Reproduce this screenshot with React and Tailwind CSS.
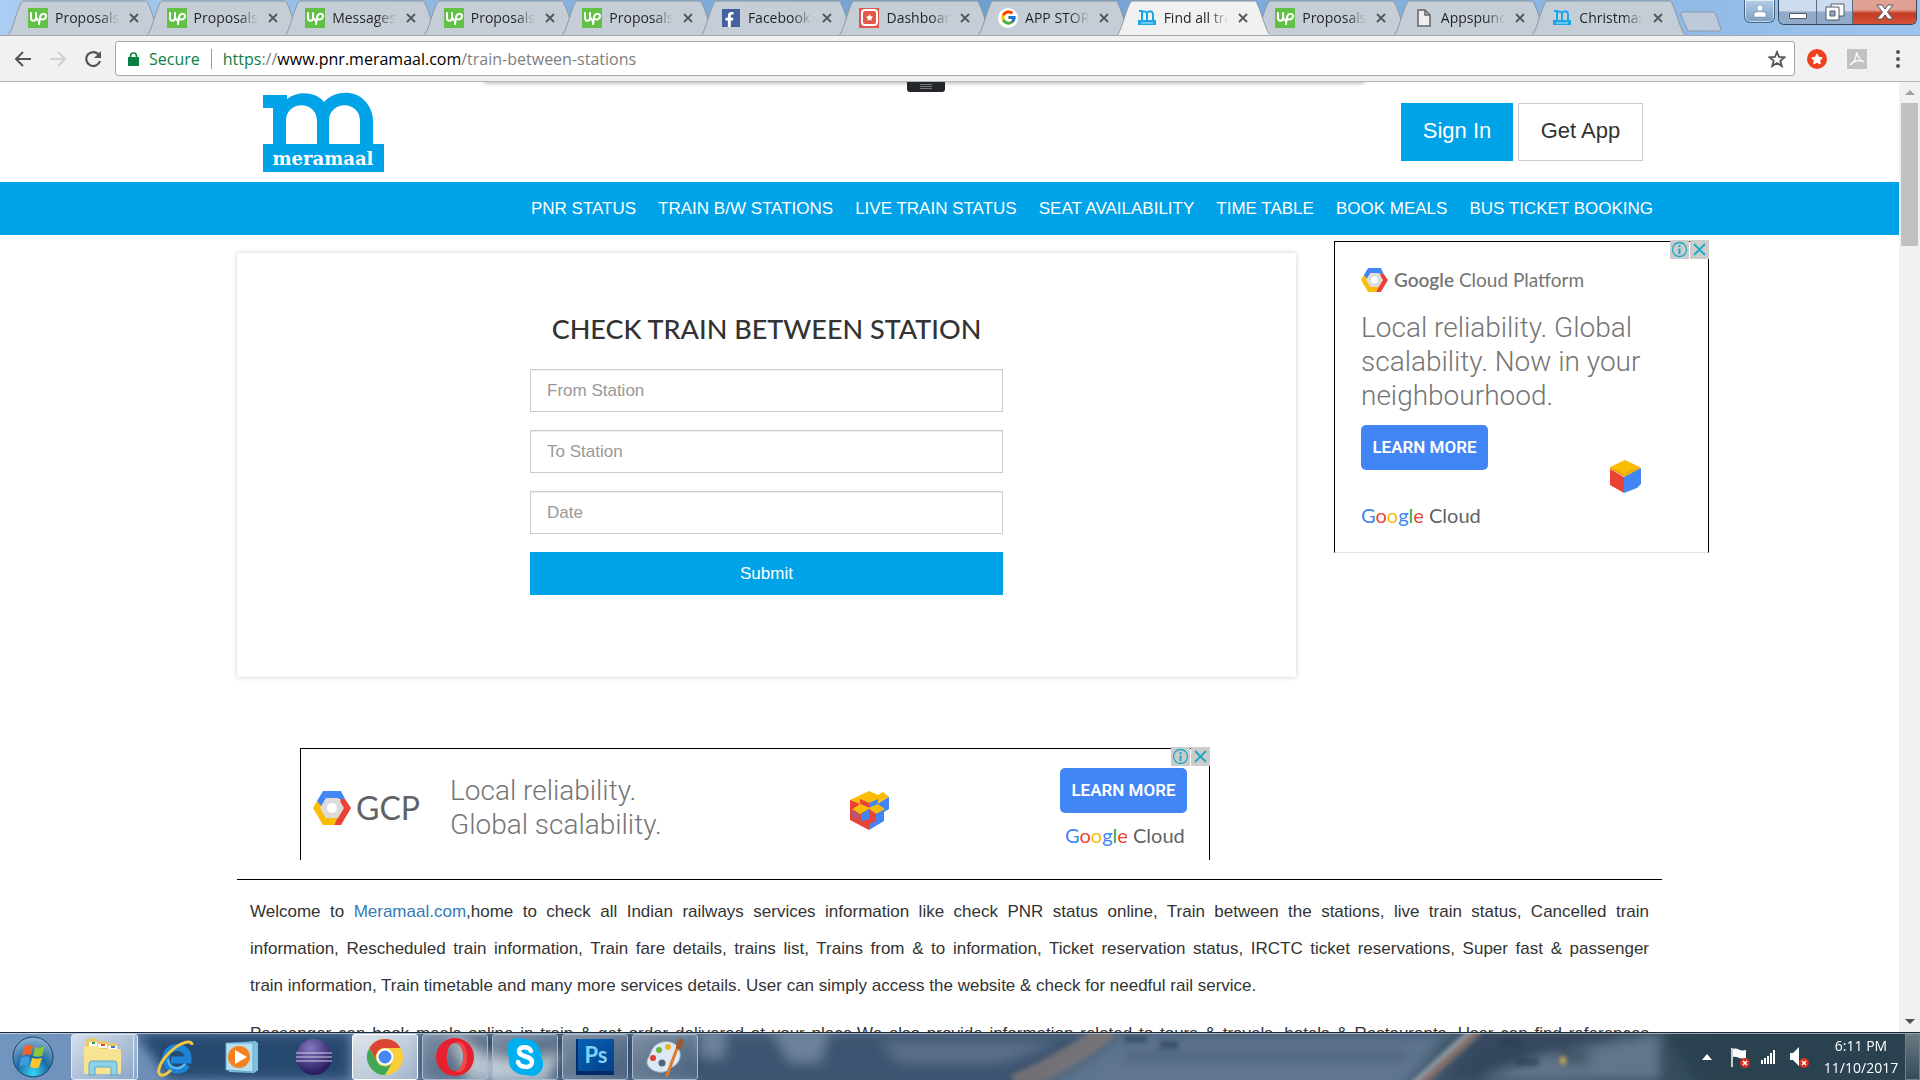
import { FaFacebookF, FaStar } from "react-icons/fa";
import { FcGoogle } from "react-icons/fc";

const tabs = [
  { title: "Proposals", icon: "up" },
  { title: "Proposals", icon: "up" },
  { title: "Messages", icon: "up" },
  { title: "Proposals", icon: "up" },
  { title: "Proposals", icon: "up" },
  { title: "Facebook", icon: "facebook" },
  { title: "Dashboard", icon: "dashboard" },
  { title: "APP STORE", icon: "google" },
  { title: "Find all train", icon: "m", active: true },
  { title: "Proposals", icon: "up" },
  { title: "Appspundit", icon: "file" },
  { title: "Christmas", icon: "m" },
];

const navLinks = [
  "PNR STATUS",
  "TRAIN B/W STATIONS",
  "LIVE TRAIN STATUS",
  "SEAT AVAILABILITY",
  "TIME TABLE",
  "BOOK MEALS",
  "BUS TICKET BOOKING",
];

/* ---------- browser chrome ---------- */

function MIcon() {
  return (
    <svg viewBox="0 0 18 17" className="h-[17px] w-[18px]" fill="none" stroke="#1aa7ea">
      <path d="M1 2h3v9M4 4c1-2 5-2 5 1v6M9 5c0-3 5-4 6 0v6" strokeWidth="2" />
      <path d="M0 13.5h18" strokeWidth="5" />
      <path d="M3 14h12" stroke="#bfe6f8" strokeWidth="1" />
    </svg>
  );
}

function Favicon({ type }) {
  if (type === "up")
    return (
      <svg viewBox="0 0 20 20" className="size-5">
        <path fill="#62c045" d="M0 0h20v20H0z" />
        <g fill="none" stroke="#fff" strokeWidth="2" strokeLinecap="round">
          <path d="M3 5v5c0 3.500 5 3.500 5 0V5M8 9c1 3 2 3 3 4" />
          <path d="M11 16l1-7c1-4 6-4 6-1s-4 5-6 2" />
        </g>
      </svg>
    );
  if (type === "facebook")
    return (
      <span className="flex size-[18px] items-end justify-end bg-[#4460a0] pr-[3px] text-white">
        <FaFacebookF size={15} />
      </span>
    );
  if (type === "dashboard")
    return (
      <span className="flex size-5 items-center justify-center bg-[#e2574c] p-px">
        <span className="flex size-[17px] items-center justify-center rounded-sm border-2 border-white text-white">
          <FaStar size={7} />
        </span>
      </span>
    );
  if (type === "google")
    return (
      <span className="flex size-5 items-center justify-center rounded-full bg-white">
        <FcGoogle size={17} />
      </span>
    );
  if (type === "m") return <MIcon />;
  return (
    <svg viewBox="0 0 14 18" className="h-[18px] w-[14px]" fill="#eee" stroke="#666" strokeWidth="1.500">
      <path d="M1 1h7l5 5v11H1zM8 1v5h5" />
    </svg>
  );
}

function Tab({ tab }) {
  return (
    <div className={`relative flex h-[35px] min-w-0 flex-1 items-center pl-5 ${tab.active ? "z-20" : ""}`}>
      <svg
        viewBox="0 0 154 35"
        preserveAspectRatio="none"
        className="absolute inset-y-0 left-0 h-full w-[111%]"
      >
        <path
          d="M0 35C4 34 11 1 15 1H138C142 1 149 34 154 35"
          fill={tab.active ? "#f1f1f1" : "#c5ced6"}
          stroke="#8c959e"
        />
      </svg>
      <span className="relative flex w-5 shrink-0 justify-center">
        <Favicon type={tab.icon} />
      </span>
      <span className="relative ml-[7px] w-16 overflow-hidden bg-linear-to-r from-[#222] from-70% to-transparent bg-clip-text text-[14px] leading-5 whitespace-nowrap text-transparent">
        {tab.title}
      </span>
      <button aria-label="Close tab" className="relative ml-[10px]">
        <svg viewBox="0 0 10 10" className="size-[10px]" stroke="#555" strokeWidth="1.800">
          <path d="M1 1l8 8M9 1L1 9" />
        </svg>
      </button>
    </div>
  );
}

function WindowControls() {
  return (
    <div className="flex items-start">
      <button
        aria-label="User"
        className="flex h-[23px] w-[31px] items-center justify-center rounded-b-md border border-t-0 border-[#4b6584] bg-linear-to-b from-[#b5cde8] to-[#7d9fc4] shadow-[inset_0_0_0_1px_#ffffff90]"
      >
        <svg viewBox="0 0 14 14" className="size-[14px]" fill="#fff" stroke="#6d87a3" strokeWidth="0.500">
          <circle cx="7" cy="4" r="3" />
          <path d="M1 13V9.500C3 7 11 7 13 9.500V13z" />
        </svg>
      </button>
      <div className="ml-[3px] flex h-[25px] overflow-hidden rounded-b-md border border-t-0 border-[#39465a]">
        <button
          aria-label="Minimize"
          className="flex w-[38px] items-center justify-center border-r border-[#5a6a80] bg-linear-to-b from-[#cddcec] from-45% to-[#8fabc9] to-50% pt-2"
        >
          <span className="h-[6px] w-[18px] rounded-[1px] border border-[#535666] bg-white" />
        </button>
        <button
          aria-label="Restore"
          className="flex w-[36px] items-center justify-center border-r border-[#5a6a80] bg-linear-to-b from-[#cddcec] from-45% to-[#8fabc9] to-50%"
        >
          <svg viewBox="0 0 20 18" className="h-[18px] w-5" fill="#fff" stroke="#535666">
            <path d="M6 1h13v12H6z" />
            <path d="M1 4h13v13H1z" />
            <path d="M5 8h5v5H5z" fill="#8fabc9" />
          </svg>
        </button>
        <button
          aria-label="Close"
          className="flex w-[63px] items-center justify-center bg-linear-to-b from-[#e0a194] from-40% via-[#c23a22] via-55% to-[#d5533a]"
        >
          <svg viewBox="0 0 18 16" className="h-4 w-[18px]" fill="#fff" stroke="#535666">
            <path d="M1 1h5l3 4 3-4h5l-5.500 7 5.500 7h-5l-3-4-3 4H1l5.500-7z" />
          </svg>
        </button>
      </div>
    </div>
  );
}

function BrowserChrome() {
  return (
    <header className="font-['Open_Sans',sans-serif]">
      <div className="flex h-[35px] bg-linear-to-r from-[#a9cdf3] via-[#6f9fd0] via-50% to-[#9cc4ee] pr-[3px] pl-2">
        <div className="flex min-w-0 flex-1">
          {tabs.map((tab, i) => (
            <Tab key={i} tab={tab} />
          ))}
        </div>
        <div className="flex w-[73px] pt-[8px] pl-[9px]">
          <button aria-label="New tab">
            <svg viewBox="0 0 42 21" className="h-[21px] w-[42px]">
              <path d="M3 1h30q2 0 3 3l5 14q1 2-2 2H10q-2 0-3-2L1 4q-1-3 2-3z" fill="#bccad9" stroke="#8c99a8" />
            </svg>
          </button>
        </div>
        <WindowControls />
      </div>

      <div className="flex h-[47px] items-center border-t border-b border-t-[#a3a8ad] border-b-[#b4b4b4] bg-[#f1f1f1] pr-3 pl-[14px] text-[#555]">
        <button aria-label="Back">
          <svg viewBox="0 0 18 16" className="h-4 w-[18px]" fill="none" stroke="currentColor" strokeWidth="2">
            <path d="M17 8H2M9 1L2 8l7 7" />
          </svg>
        </button>
        <button aria-label="Forward" className="ml-[17px] text-[#d0d0d0]">
          <svg viewBox="0 0 18 16" className="h-4 w-[18px]" fill="none" stroke="currentColor" strokeWidth="2">
            <path d="M1 8h15M9 1l7 7-7 7" />
          </svg>
        </button>
        <button aria-label="Reload" className="ml-[17px]">
          <svg viewBox="0 0 18 18" className="size-[18px]" fill="none" stroke="currentColor" strokeWidth="2.200">
            <path d="M15 5a7 7 0 1 0 1 6" />
            <path d="M17 1v7h-7z" fill="currentColor" stroke="none" />
          </svg>
        </button>
        <div className="ml-[13px] flex h-[35px] flex-1 items-center rounded-[3px] border border-[#a5a5a5] bg-white pr-2 pl-3 text-[16px]">
          <svg viewBox="0 0 11 14" className="h-[14px] w-[11px]" fill="#0b8043">
            <path d="M0 5h11v9H0z" />
            <path d="M2.500 6V4a3 3 0 0 1 6 0v2" fill="none" stroke="#0b8043" strokeWidth="1.600" />
          </svg>
          <span className="ml-[10px] text-[#0b8043]">Secure</span>
          <span className="mx-[11px] h-5 w-px bg-[#999]" />
          <a href="#" className="flex-1 text-[#808080]">
            <span className="text-[#0b8043]">https</span>://<span className="text-black">www.pnr.meramaal.com</span>
            /train-between-stations
          </a>
          <button aria-label="Bookmark">
            <svg viewBox="0 0 18 18" className="size-[18px]" fill="none" stroke="#555" strokeWidth="1.800">
              <path d="M9 2l2 5 5.500.3-4.200 3.500 1.500 5.300L9 13l-4.800 3.100 1.500-5.300L1.500 7.300 7 7z" />
            </svg>
          </button>
        </div>
        <button
          aria-label="Extension"
          className="ml-3 flex size-5 items-center justify-center rounded-full bg-[#f0401f] text-white"
        >
          <FaStar size={12} />
        </button>
        <button aria-label="PDF" className="ml-5 flex size-5 items-center justify-center bg-[#c2c2c2]">
          <svg viewBox="0 0 16 16" className="size-4" fill="none" stroke="#fff" strokeWidth="1.200">
            <path d="M1 14c4-2 6-6 6.500-12 1-1.500 0 6 7.500 9C9 8 4 11 1 14z" />
          </svg>
        </button>
        <button aria-label="Menu" className="ml-[21px] flex w-5 justify-center">
          <svg viewBox="0 0 4 18" className="h-[18px] w-1" fill="#555">
            <circle cx="2" cy="2" r="2" />
            <circle cx="2" cy="9" r="2" />
            <circle cx="2" cy="16" r="2" />
          </svg>
        </button>
      </div>
    </header>
  );
}

/* ---------- site ---------- */

function Logo() {
  return (
    <a href="#" aria-label="meramaal">
      <svg viewBox="0 0 121 81" className="h-[81px] w-[121px]">
        <path
          fill="#00a2e8"
          d="M0 4H24V8C34 0 52 0 61 11C72 -1 91 -1 101 9C107 15 110 22 110 31V53H121V81H0V53H10V17H0Z"
        />
        <path fill="#fff" d="M23 53V30C23 9 54 9 54 30V53ZM66 53V30C66 9 97 9 97 30V53Z" />
        <text
          x="60"
          y="74"
          textAnchor="middle"
          fill="#fff"
          className="font-['DejaVu_Serif',serif] text-[18px] font-bold"
        >
          meramaal
        </text>
      </svg>
    </a>
  );
}

function SiteHeader() {
  return (
    <div>
      <div className="flex h-[100px] items-start justify-between pr-64 pl-[263px]">
        <div className="pt-[9px]">
          <Logo />
        </div>
        <div className="flex gap-[5px] pt-[21px] text-[22px]">
          <button className="h-[58px] w-28 bg-[#00a2e8] pb-[3px] text-white">Sign In</button>
          <button className="h-[58px] w-[125px] border border-[#ccc] bg-white pb-[3px] text-[#333]">Get App</button>
        </div>
      </div>
      <nav className="flex h-[53px] items-center justify-end gap-[22px] bg-[#00a2e8] pr-[246px] text-[17px] text-white">
        {navLinks.map((label) => (
          <a key={label} href="#">
            {label}
          </a>
        ))}
      </nav>
    </div>
  );
}

function HexLogo({ className }) {
  return (
    <svg viewBox="0 0 38 34" className={className}>
      <path fill="#4285f4" d="M10 0H28L32 8H16L7 17L4 10Z" />
      <path fill="#ea4335" d="M27 8H32L38 17L28 34H21L28 19Z" />
      <path fill="#fbbc05" d="M4 10L10 17L14 26H25L21 34H10L0 17Z" />
      <path fill="#dcdcdc" d="M13 7H25L31 17L25 27H13L7 17Z" />
      <circle cx="19" cy="17" r="5" fill="#fff" />
    </svg>
  );
}

function GoogleCloud() {
  return (
    <div className="font-[Lato,sans-serif] text-[20px] leading-6 whitespace-nowrap text-[#5f6368]">
      <span className="text-[#4285f4]">G</span>
      <span className="text-[#ea4335]">o</span>
      <span className="text-[#fbbc05]">o</span>
      <span className="text-[#4285f4]">g</span>
      <span className="text-[#34a853]">l</span>
      <span className="text-[#ea4335]">e</span> Cloud
    </div>
  );
}

function LearnMore() {
  return (
    <button className="block h-[45px] w-[127px] rounded-[5px] bg-[#4285f4] text-[17px] font-semibold whitespace-nowrap text-white">
      LEARN MORE
    </button>
  );
}

function AdChoices() {
  return (
    <div className="absolute -top-[2px] -right-px flex gap-px">
      <button aria-label="Ad info" className="size-[19px] bg-[#ccc]">
        <svg viewBox="0 0 19 19" fill="none" stroke="#1ba9c4" strokeWidth="1.300">
          <circle cx="9.500" cy="9.500" r="7" />
          <path d="M9.500 5v2M9.500 8.500v5.500" strokeWidth="2" />
        </svg>
      </button>
      <button aria-label="Close ad" className="size-[19px] bg-[#ccc]">
        <svg viewBox="0 0 19 19" fill="none" stroke="#1ba9c4" strokeWidth="1.800">
          <path d="M4 4l11 11M15 4L4 15" />
        </svg>
      </button>
    </div>
  );
}

function SideAd() {
  return (
    <aside className="relative h-[312px] w-[375px] shrink-0 border border-black border-b-[#e4e4ec] pt-[22px] pl-[26px] font-[Roboto,sans-serif]">
      <AdChoices />
      <div className="flex h-8 items-center gap-[6px] font-[Lato,sans-serif] text-[19px] whitespace-nowrap text-[#757575]">
        <HexLogo className="h-6 w-[27px]" />
        <span>
          <span className="font-semibold">Google</span> Cloud Platform
        </span>
      </div>
      <p className="mt-[15px] w-[290px] text-[28px] leading-[34px] font-light text-[#757575]">
        Local reliability. Global scalability. Now in your neighbourhood.
      </p>
      <div className="mt-3">
        <LearnMore />
      </div>
      <div className="mt-[33px]">
        <GoogleCloud />
      </div>
      <svg viewBox="0 0 31 33" className="absolute right-[67px] bottom-[59px] h-[33px] w-[31px]">
        <path fill="#fbbc05" d="M15 0L30 7V10L15 17L0 9V7Z" />
        <path fill="#ea4335" d="M0 9L14 17V33L0 25Z" />
        <path fill="#4285f4" d="M14 17L31 8V24L27 28L14 33Z" />
        <path fill="none" stroke="#d99a1c" d="M2 9l12 6 9-5h5" />
      </svg>
    </aside>
  );
}

function BannerAd() {
  return (
    <aside className="relative flex h-28 w-[910px] border border-b-0 border-black font-[Roboto,sans-serif]">
      <AdChoices />
      <div className="flex w-[149px] items-center gap-[5px] pt-[6px] pl-3 font-[Lato,sans-serif] text-[32px] text-[#5f6368]">
        <HexLogo className="h-[34px] w-[38px]" />
        GCP
      </div>
      <p className="pt-[25px] text-[28px] leading-[34px] font-light text-[#757575]">
        Local reliability.
        <br />
        Global scalability.
      </p>
      {/* stacked cubes */}
      <svg viewBox="0 0 40 39" className="absolute top-[42px] left-[549px] h-[39px] w-10">
        <path fill="#ea4335" d="M0 9L19 18V39L0 29Z" />
        <path fill="#4285f4" d="M19 18L39 6V18L34 21V30L19 39Z" />
        <path fill="#fbbc05" d="M0 9L19 0L28 4L33 1L39 6L19 17Z" />
        <path fill="#ea4335" d="M10 8L19 12V17L10 13Z" />
        <path fill="#4285f4" d="M19 12L28 8V13L19 17Z" />
        <path fill="#fbbc05" d="M2 18L10 13L19 17L28 13L35 18L26 23L19 18L10 23Z" />
        <path fill="#ea4335" d="M0 9L10 13L2 18L0 17Z" />
        <path fill="#4285f4" d="M11 23L19 18V28L11 31ZM28 13L39 6V17L35 18Z" />
        <path fill="#ea4335" d="M19 18L26 23V30L19 33Z" />
        <path fill="#4285f4" d="M2 19L10 23V30L2 26Z" opacity="0.300" />
      </svg>
      <div className="ml-auto pt-[19px] pr-[22px]">
        <LearnMore />
        <div className="mt-[10px] pl-[5px]">
          <GoogleCloud />
        </div>
      </div>
    </aside>
  );
}

function StationForm() {
  return (
    <section className="flex h-[424px] flex-1 flex-col items-center bg-white pt-[58px] shadow-[0_0_5px_#ccc]">
      <h1 className="font-[Lato,sans-serif] text-[27px] leading-9 font-medium text-[#333]">
        CHECK TRAIN BETWEEN STATION
      </h1>
      <form className="mt-[22px] flex w-[473px] flex-col gap-[18px] text-[17px]" onSubmit={(e) => e.preventDefault()}>
        {["From Station", "To Station", "Date"].map((label) => (
          <input
            key={label}
            type="text"
            aria-label={label}
            placeholder={label}
            className="h-[43px] border border-[#ccc] px-4 shadow-[inset_0_1px_1px_#00000013] placeholder:text-[#999]"
          />
        ))}
        <button type="submit" className="h-[43px] bg-[#00a2e8] text-white">
          Submit
        </button>
      </form>
    </section>
  );
}

function Page() {
  return (
    <main className="relative min-w-0 flex-1 overflow-hidden bg-white">
      <div className="absolute -top-1 right-[534px] left-[484px] h-1 shadow-[0_1px_4px_#aaa]" />
      <div className="absolute top-0 left-[907px] flex h-[10px] w-[38px] flex-col items-center gap-px rounded-b-[3px] bg-[#23262a] pt-[2px]">
        <span className="h-px w-3 bg-[#777]" />
        <span className="h-px w-3 bg-[#777]" />
        <span className="h-px w-3 bg-[#777]" />
      </div>
      <SiteHeader />
      <div className="flex gap-[38px] pt-[6px] pr-[190px] pl-[237px]">
        <div className="flex flex-1 pt-3">
          <StationForm />
        </div>
        <SideAd />
      </div>
      <div className="mt-[71px] pl-[300px]">
        <BannerAd />
      </div>
      <hr className="mx-[237px] mt-[19px] border-black" />
      <div className="mx-[250px] mt-[13px] text-[17px] leading-[37px] text-[#333]">
        <p>
          <span className="block [text-align-last:justify]">
            Welcome to{" "}
            <a href="#" className="text-[#337ab7]">
              Meramaal.com
            </a>
            ,home to check all Indian railways services information like check PNR status online, Train between the
            stations, live train status, Cancelled train
          </span>
          <span className="block [text-align-last:justify]">
            information, Rescheduled train information, Train fare details, trains list, Trains from &amp; to
            information, Ticket reservation status, IRCTC ticket reservations, Super fast &amp; passenger
          </span>
          train information, Train timetable and many more services details. User can simply access the website &amp;
          check for needful rail service.
        </p>
        <p className="mt-[11px] text-justify [text-align-last:justify]">
          Passenger can book meals online in train &amp; get order delivered at your place.We also provide information
          related to tours &amp; travels, hotels &amp; Restaurants. User can find references
        </p>
      </div>
    </main>
  );
}

function Scrollbar() {
  return (
    <div className="flex w-[21px] flex-col items-center bg-[#f1f1f1] pt-2 pb-2">
      <svg viewBox="0 0 10 5" className="h-[5px] w-[10px]" fill="#a3a3a3">
        <path d="M5 0l5 5H0z" />
      </svg>
      <div className="mt-2 h-[143px] w-[17px] bg-[#c1c1c1]" />
      <svg viewBox="0 0 10 5" className="mt-auto h-[5px] w-[10px]" fill="#505050">
        <path d="M5 5l5-5H0z" />
      </svg>
    </div>
  );
}

/* ---------- taskbar ---------- */

function StartOrb() {
  return (
    <svg viewBox="0 0 42 42" className="size-[42px]">
      <defs>
        <radialGradient id="orb" cx="50%" cy="90%" r="90%">
          <stop offset="0" stopColor="#35d5f5" />
          <stop offset="0.450" stopColor="#1d6ba5" />
          <stop offset="1" stopColor="#8fb4d2" />
        </radialGradient>
      </defs>
      <circle cx="21" cy="21" r="20" fill="url(#orb)" stroke="#1b3f63" />
      <path fill="#f0652a" d="M12 11c3-3 6-2 9-1l-2 9c-3-1-6-1-9 1z" />
      <path fill="#8cc63e" d="M23 11c3 1 6 1 10-1l-3 10c-3 1-6 1-9 0z" />
      <path fill="#3f9be0" d="M9 22c3-2 6-2 9-1l-2 9c-3-1-6-1-9 1z" />
      <path fill="#fcc62d" d="M20 22c3 1 6 1 10 0l-3 9c-3 2-6 1-9 0z" />
    </svg>
  );
}

function ExplorerIcon() {
  return (
    <svg viewBox="0 0 40 38" className="h-[38px] w-10">
      <path fill="#e8c869" d="M3 3l2-3h8l2 3h9l2 2h9v30H3z" />
      <path fill="#fff" d="M6 4h8v4H6zM15 6h9v4h-9zM25 8h9v3h-9z" />
      <path fill="#2f9e57" d="M9 4h3v2H9z" />
      <path fill="#d9482f" d="M18 6h4v2h-4z" />
      <path fill="#3b78c8" d="M28 8h4v2h-4z" />
      <path fill="#f8e392" d="M1 8h14l2 3h21v23q0 2-2 2H3q-2 0-2-2z" />
      <path fill="#8fd0ea" stroke="#5aa9cd" d="M6 37V26q0-3 3-3h22q3 0 3 3v11h-6v-8H12v8z" />
    </svg>
  );
}

function IeIcon() {
  return (
    <svg viewBox="0 0 40 40" className="size-10" fill="none">
      <path d="M32 28c-6 9-21 6-21-7 0-14 22-14 22 0v2H16" stroke="#1b84d6" strokeWidth="7" />
      <path d="M30 27c-6 7-17 5-17-5" stroke="#62c1f5" strokeWidth="2" />
      <path d="M37 8c0-6-12-3-23 8C4 26 1 37 6 38c3 1 7-2 10-5" stroke="#f2c744" strokeWidth="3" />
    </svg>
  );
}

function MediaIcon() {
  return (
    <svg viewBox="0 0 34 34" className="size-[34px]">
      <path fill="#7fbfe0" d="M4 3l26-2 3 2v27l-4 3L4 32z" />
      <path fill="#b6dff2" stroke="#6aa9cb" d="M1 3h27v29L1 30z" />
      <circle cx="14" cy="17" r="11" fill="#f5821f" />
      <path fill="#fff" d="M10 10l12 7-12 7z" />
    </svg>
  );
}

function EclipseIcon() {
  return (
    <svg viewBox="0 0 38 38" className="size-[38px]">
      <defs>
        <radialGradient id="ecl" cx="40%" cy="25%" r="70%">
          <stop offset="0" stopColor="#8378bd" />
          <stop offset="1" stopColor="#2a1c63" />
        </radialGradient>
      </defs>
      <circle cx="19" cy="19" r="18" fill="url(#ecl)" />
      <path d="M1 15h36M1 19h36M1 23h36" stroke="#d3d0ea" strokeWidth="1" />
    </svg>
  );
}

function ChromeIcon() {
  return (
    <svg viewBox="0 0 38 38" className="size-[38px]">
      <circle cx="19" cy="19" r="18" fill="#fbcf3b" />
      <path fill="#dd4435" d="M3.400 10A18 18 0 0 1 34.600 10H19A9 9 0 0 0 11 23.500z" />
      <path fill="#3fa757" d="M3.400 10A18 18 0 0 0 19 37L27 23.500A9 9 0 0 1 11 23.500z" />
      <circle cx="19" cy="19" r="8.500" fill="#fff" />
      <circle cx="19" cy="19" r="6.500" fill="#4688f1" />
    </svg>
  );
}

function OperaIcon() {
  return (
    <svg viewBox="0 0 38 38" className="size-[38px]">
      <path
        fill="#e8202d"
        fillRule="evenodd"
        d="M19 0a19 19 0 1 0 0 38a19 19 0 1 0 0-38zM19 5c-11 0-11 28 0 28s11-28 0-28z"
      />
      <path fill="#f0474c" d="M19 5c5-4 12 1 12 14s-7 18-12 14c11 0 11-28 0-28z" />
    </svg>
  );
}

function SkypeIcon() {
  return (
    <svg viewBox="0 0 36 38" className="h-[38px] w-9">
      <path
        fill="#00aff0"
        d="M10 0c4 0 5 1 8 1 10 0 17 8 16 18 5 7 1 18-8 19-4 0-5-1-8-1C8 37 0 29 2 19-3 10 2 0 10 0z"
      />
      <path
        d="M24 13c-2-5-12-5-12 0 0 7 13 4 13 11 0 7-12 6-14 0"
        fill="none"
        stroke="#fff"
        strokeWidth="4.500"
        strokeLinecap="round"
      />
    </svg>
  );
}

function PhotoshopIcon() {
  return (
    <span className="flex h-9 w-[38px] items-center justify-center border-b-4 border-l-2 border-[#012c68] bg-linear-to-br from-[#0763b5] to-[#04408b] font-[Lato,sans-serif] text-[22px] leading-6 font-bold text-[#7ed3f7]">
      Ps
    </span>
  );
}

function PaintIcon() {
  return (
    <svg viewBox="0 0 40 40" className="size-10">
      <path
        fill="#dce8f3"
        stroke="#8ba3bb"
        d="M17 5C30 2 37 12 35 21c-2 8-9 9-12 12-4 4-15 3-20-4-3-5 1-9 2-12C7 11 10 7 17 5z"
      />
      <circle cx="8" cy="21" r="3" fill="#d9402f" />
      <circle cx="14" cy="13" r="3" fill="#6bb544" />
      <circle cx="23" cy="10" r="3" fill="#f0b429" />
      <circle cx="17" cy="26" r="3.500" fill="#50657c" />
      <path d="M33 9L22 38" stroke="#e07a28" strokeWidth="3" strokeLinecap="round" />
      <path d="M31 11c0-5 2-9 6-10 3 5 1 9-3 12z" fill="#9a5b34" />
    </svg>
  );
}

const running = [
  { name: "Chrome", Icon: ChromeIcon, active: true },
  { name: "Opera", Icon: OperaIcon },
  { name: "Skype", Icon: SkypeIcon },
  { name: "Photoshop", Icon: PhotoshopIcon },
  { name: "Paint", Icon: PaintIcon },
];

function RedX() {
  return (
    <g>
      <circle cx="15" cy="17" r="5" fill="#d8321f" />
      <path d="M13 15l4 4M17 15l-4 4" stroke="#fff" strokeWidth="1.500" />
    </g>
  );
}

// blurred railway photo seen through the glass
function TaskbarGlass() {
  return (
    <svg viewBox="0 0 1920 48" preserveAspectRatio="none" className="absolute inset-0 h-full w-full">
      <defs>
        <filter id="soft" x="-5%" y="-50%" width="110%" height="200%">
          <feGaussianBlur stdDeviation="6" />
        </filter>
        <filter id="softer" x="-50%" y="-50%" width="200%" height="200%">
          <feGaussianBlur stdDeviation="2" />
        </filter>
      </defs>
      <g filter="url(#soft)">
        <path fill="#28486f" d="M135 0H350V48H170Z" />
        <path fill="#34506e" d="M420 0H720V48H420Z" />
        <path fill="#a9b8c6" d="M450 0Q500 44 560 20L545 48H470Z" />
        <path fill="#3c5470" d="M700 0H1100L1020 60H700Z" />
        <path fill="#6c819b" d="M700 -5H725V25H700ZM770 -5H830L820 30H790Z" />
        <path fill="#5b708a" d="M880 10H1060L1000 30H900Z" />
        <path fill="#5f7490" d="M1140 -5H1450L1400 60H1050Z" />
        <path fill="#465b78" d="M1130 20H1410L1405 27H1120ZM1150 -2H1440V5H1150Z" />
        <path fill="#34465e" d="M1480 0H1620V44L1440 50Z" />
        <path fill="#62768b" d="M1540 24L1660 0V48H1480Z" />
        <path fill="#2a3f50" d="M1560 22H1590V30H1560Z" />
        <path fill="#2c4350" d="M1660 -5H1930V55H1700Z" />
      </g>
      <g filter="url(#softer)" fill="none">
        <path d="M1108 -4Q1080 22 1015 52" stroke="#7d7676" strokeWidth="20" opacity="0.800" />
        <path d="M1478 -4L1418 52" stroke="#857069" strokeWidth="11" />
        <path d="M1472 -4L1412 52" stroke="#93a4b0" strokeWidth="4" />
        <path d="M1560 28h6" stroke="#c5a85a" strokeWidth="8" />
        <path d="M1125 6h22M1160 12h18M1500 10h20M1515 30h24" stroke="#2a3a50" strokeWidth="8" opacity="0.600" />
      </g>
    </svg>
  );
}

function Taskbar() {
  return (
    <footer className="relative flex h-12 items-center overflow-hidden border-t border-[#1c2a3a] bg-linear-to-r from-[#7295c0] via-[#52687f] via-60% to-[#28404d] font-['Open_Sans',sans-serif] text-white">
      <TaskbarGlass />
      <div className="absolute inset-x-0 top-0 h-px bg-white/50" />

      <div className="relative flex flex-1 items-center pl-3">
        <button aria-label="Start">
          <StartOrb />
        </button>
        <button
          aria-label="Explorer"
          className="ml-[17px] flex h-[46px] w-[67px] items-center rounded-[3px] border border-[#dfe9f5] bg-linear-to-br from-white/70 to-white/20"
        >
          <span className="flex h-full w-[62px] items-center justify-center rounded-r-[3px] border-r border-[#dfe9f5]">
            <ExplorerIcon />
          </span>
        </button>
        <button aria-label="Internet Explorer" className="ml-[17px]">
          <IeIcon />
        </button>
        <button aria-label="Media Player" className="ml-[30px]">
          <MediaIcon />
        </button>
        <button aria-label="Eclipse" className="ml-9">
          <EclipseIcon />
        </button>
        <div className="ml-[19px] flex gap-1">
          {running.map(({ name, Icon, active }) => (
            <button
              key={name}
              aria-label={name}
              className={`flex h-[46px] w-[66px] items-center justify-center rounded-[3px] border ${
                active
                  ? "border-white bg-linear-to-br from-white/80 to-white/40"
                  : "border-[#a9b9ca] bg-linear-to-br from-white/35 to-white/10"
              }`}
            >
              <Icon />
            </button>
          ))}
        </div>
      </div>

      <div className="relative flex items-center">
        <button aria-label="Show hidden icons">
          <svg viewBox="0 0 10 6" className="h-[6px] w-[10px]" fill="#fff">
            <path d="M5 0l5 6H0z" />
          </svg>
        </button>
        <svg viewBox="0 0 20 22" className="ml-[18px] h-[22px] w-5">
          <path d="M2 2v19" stroke="#fff" strokeWidth="1.500" />
          <path d="M3 3c5-2 6 3 13 1v8c-7 2-8-2-13-1z" fill="#fff" />
          <RedX />
        </svg>
        <svg viewBox="0 0 16 16" className="ml-[11px] size-4" fill="#fff">
          <path d="M0 11h2v4H0zM3 9h2v6H3zM6 7h2v8H6zM9 4h2v11H9zM12 1h2v14h-2z" />
        </svg>
        <svg viewBox="0 0 20 22" className="ml-3 h-[22px] w-5">
          <path d="M1 7h3l6-6v19l-6-6H1z" fill="#fff" />
          <RedX />
        </svg>
        <div className="ml-[14px] w-[76px] text-center text-[14px] leading-[22px]">
          <div>6:11 PM</div>
          <div>11/10/2017</div>
        </div>
        <button
          aria-label="Show desktop"
          className="ml-[6px] h-[46px] w-[15px] border border-[#6c808e] bg-linear-to-b from-white/30 to-white/5"
        />
      </div>
    </footer>
  );
}

export default function App() {
  return (
    <div className="flex h-screen flex-col overflow-hidden bg-white font-['Liberation_Sans',Arial,sans-serif]">
      <BrowserChrome />
      <div className="flex min-h-0 flex-1">
        <Page />
        <Scrollbar />
      </div>
      <Taskbar />
    </div>
  );
}
